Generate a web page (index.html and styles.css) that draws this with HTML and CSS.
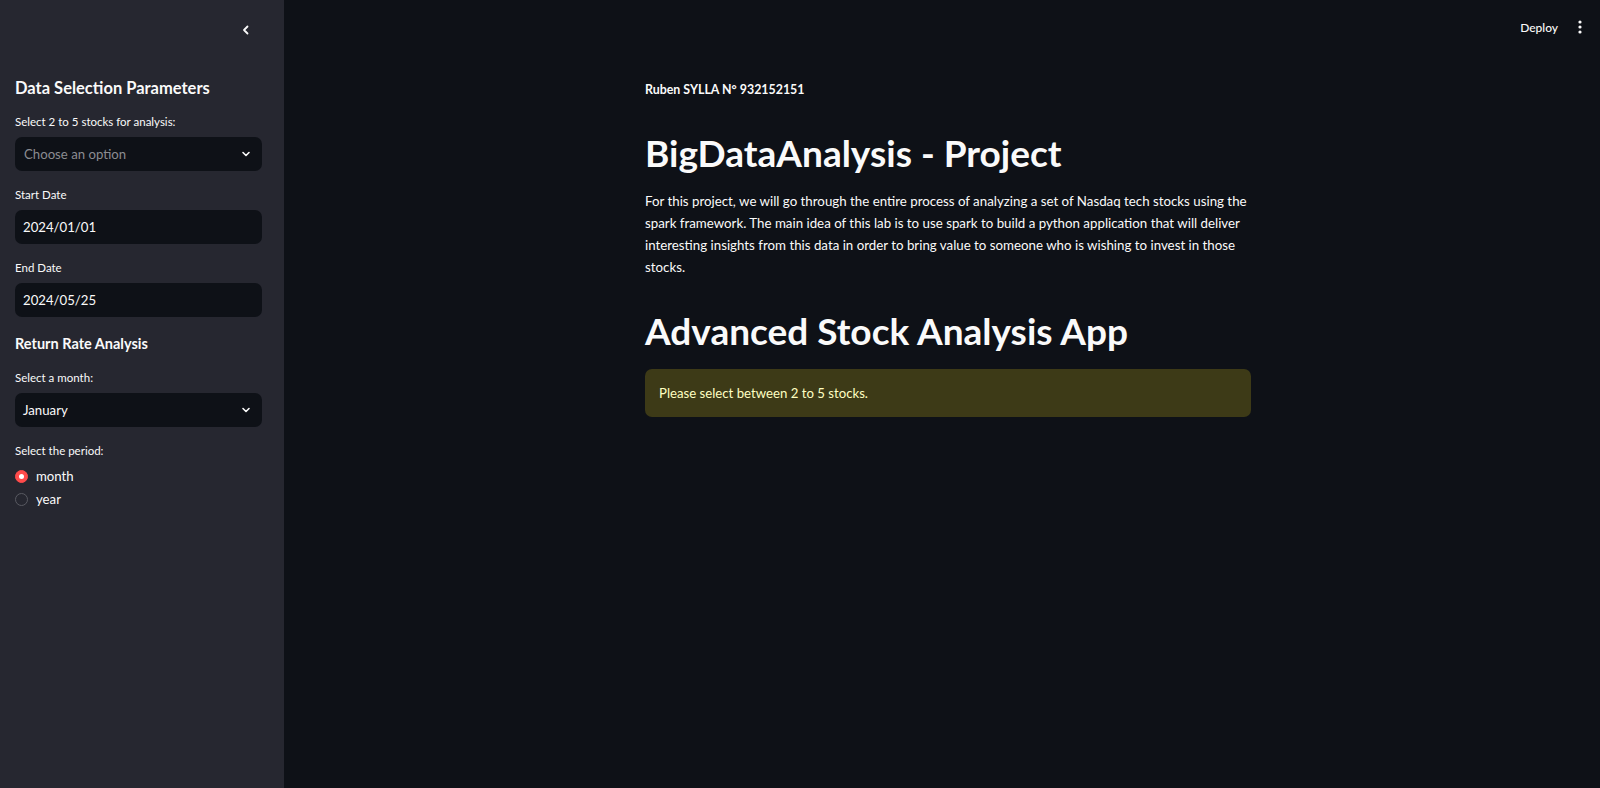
FILE: index.html
```html
<!DOCTYPE html>
<html lang="en">
<head>
<meta charset="utf-8">
<title>BigDataAnalysis - Project</title>
<link rel="stylesheet" href="styles.css">
</head>
<body>
<div class="app">
  <aside class="sidebar">
    <div class="sidebar-top">
      <svg class="collapse" width="14" height="14" viewBox="0 0 14 14"><path d="M8.5 3.5 L5 7 L8.5 10.5" fill="none" stroke="#fafafa" stroke-width="1.8" stroke-linecap="round" stroke-linejoin="round"/></svg>
    </div>
    <div class="sidebar-body">
      <h2 class="side-h">Data Selection Parameters</h2>
      <div class="field">
        <label class="lbl">Select 2 to 5 stocks for analysis:</label>
        <div class="input select"><span class="placeholder">Choose an option</span><svg class="chev" width="12" height="12" viewBox="0 0 12 12"><path d="M3 4.5 L6 7.5 L9 4.5" fill="none" stroke="#fafafa" stroke-width="1.6" stroke-linecap="round" stroke-linejoin="round"/></svg></div>
      </div>
      <div class="field">
        <label class="lbl">Start Date</label>
        <div class="input"><span>2024/01/01</span></div>
      </div>
      <div class="field">
        <label class="lbl">End Date</label>
        <div class="input"><span>2024/05/25</span></div>
      </div>
      <h3 class="side-h3">Return Rate Analysis</h3>
      <div class="field">
        <label class="lbl">Select a month:</label>
        <div class="input select"><span>January</span><svg class="chev" width="12" height="12" viewBox="0 0 12 12"><path d="M3 4.5 L6 7.5 L9 4.5" fill="none" stroke="#fafafa" stroke-width="1.6" stroke-linecap="round" stroke-linejoin="round"/></svg></div>
      </div>
      <div class="field">
        <label class="lbl">Select the period:</label>
        <div class="radios">
          <div class="radio"><span class="dot on"></span><span>month</span></div>
          <div class="radio"><span class="dot"></span><span>year</span></div>
        </div>
      </div>
    </div>
  </aside>
  <main class="main">
    <header class="topbar">
      <span class="deploy">Deploy</span>
      <svg class="kebab" width="4" height="14" viewBox="0 0 4 14"><circle cx="2" cy="2" r="1.6" fill="#fafafa"/><circle cx="2" cy="7" r="1.6" fill="#fafafa"/><circle cx="2" cy="12" r="1.6" fill="#fafafa"/></svg>
    </header>
    <div class="content">
      <p class="author">Ruben SYLLA N° 932152151</p>
      <h1 class="title">BigDataAnalysis - Project</h1>
      <p class="intro">For this project, we will go through the entire process of analyzing a set of Nasdaq tech stocks using the spark framework. The main idea of this lab is to use spark to build a python application that will deliver interesting insights from this data in order to bring value to someone who is wishing to invest in those stocks.</p>
      <h1 class="title second">Advanced Stock Analysis App</h1>
      <div class="alert">Please select between 2 to 5 stocks.</div>
    </div>
  </main>
</div>
</body>
</html>
```
FILE: styles.css
```css
* { box-sizing: border-box; }
html, body { margin: 0; padding: 0; height: 100%; }
body {
  background: #0e1117;
  color: #fafafa;
  font-family: Lato, "Noto Sans", sans-serif;
}
.app { display: flex; height: 788px; }
.sidebar {
  width: 284px;
  flex: 0 0 284px;
  background: #262730;
  display: flex;
  flex-direction: column;
}
.sidebar-top {
  height: 60px;
  display: flex;
  justify-content: flex-end;
  padding: 23px 31px 0 0;
}
.collapse { display: block; }
.sidebar-body { padding: 16px 22px 0 15px; }
.side-h {
  margin: 0 0 14px;
  font-size: 16.5px;
  font-weight: 700;
  line-height: 24px;
}
.side-h3 {
  margin: 2px 0 15px;
  font-size: 14.5px;
  font-weight: 700;
  line-height: 22px;
}
.field { margin-bottom: 16px; }
.lbl {
  display: block;
  font-size: 11.5px;
  line-height: 16px;
  margin-bottom: 7px;
}
.input {
  height: 34px;
  background: #0e1117;
  border-radius: 7px;
  display: flex;
  align-items: center;
  padding: 0 10px 0 8px;
  font-size: 13.2px;
  justify-content: space-between;
}
.placeholder { color: #8b8c91; padding-left: 1px; }
.chev { display: block; }
.radios { display: flex; flex-direction: column; gap: 7px; padding-top: 2px; }
.radio { display: flex; align-items: center; gap: 8px; font-size: 13.2px; line-height: 16px; }
.dot {
  width: 13px; height: 13px; border-radius: 50%;
  border: 1px solid #595a62;
  display: inline-block;
  position: relative;
}
.dot.on {
  background: #ff4b4b;
  border-color: #ff4b4b;
}
.dot.on::after {
  content: "";
  position: absolute;
  left: 3px; top: 3px;
  width: 5px; height: 5px;
  border-radius: 50%;
  background: #fff;
}
.main { flex: 1; display: flex; flex-direction: column; }
.topbar {
  height: 54px;
  display: flex;
  justify-content: flex-end;
  align-items: center;
  gap: 20px;
  padding: 0 18px 0 0;
}
.deploy { font-size: 12px; font-weight: 500; }
.kebab { display: block; }
.content {
  width: 606px;
  margin-left: 361px;
  padding-top: 27px;
}
.author {
  margin: 0;
  font-size: 12.4px;
  font-weight: 700;
  line-height: 18px;
}
.title {
  margin: 32px 0 0;
  font-size: 37px;
  font-weight: 700;
  line-height: 44px;
}
.title.second { margin-top: 31px; }
.intro {
  margin: 15px 0 0;
  font-size: 13.3px;
  line-height: 22px;
}
.alert {
  margin-top: 16px;
  background: #3d3a17;
  color: #ffffc2;
  border-radius: 7px;
  height: 48px;
  display: flex;
  align-items: center;
  padding: 0 14px;
  font-size: 13.2px;
}
```
